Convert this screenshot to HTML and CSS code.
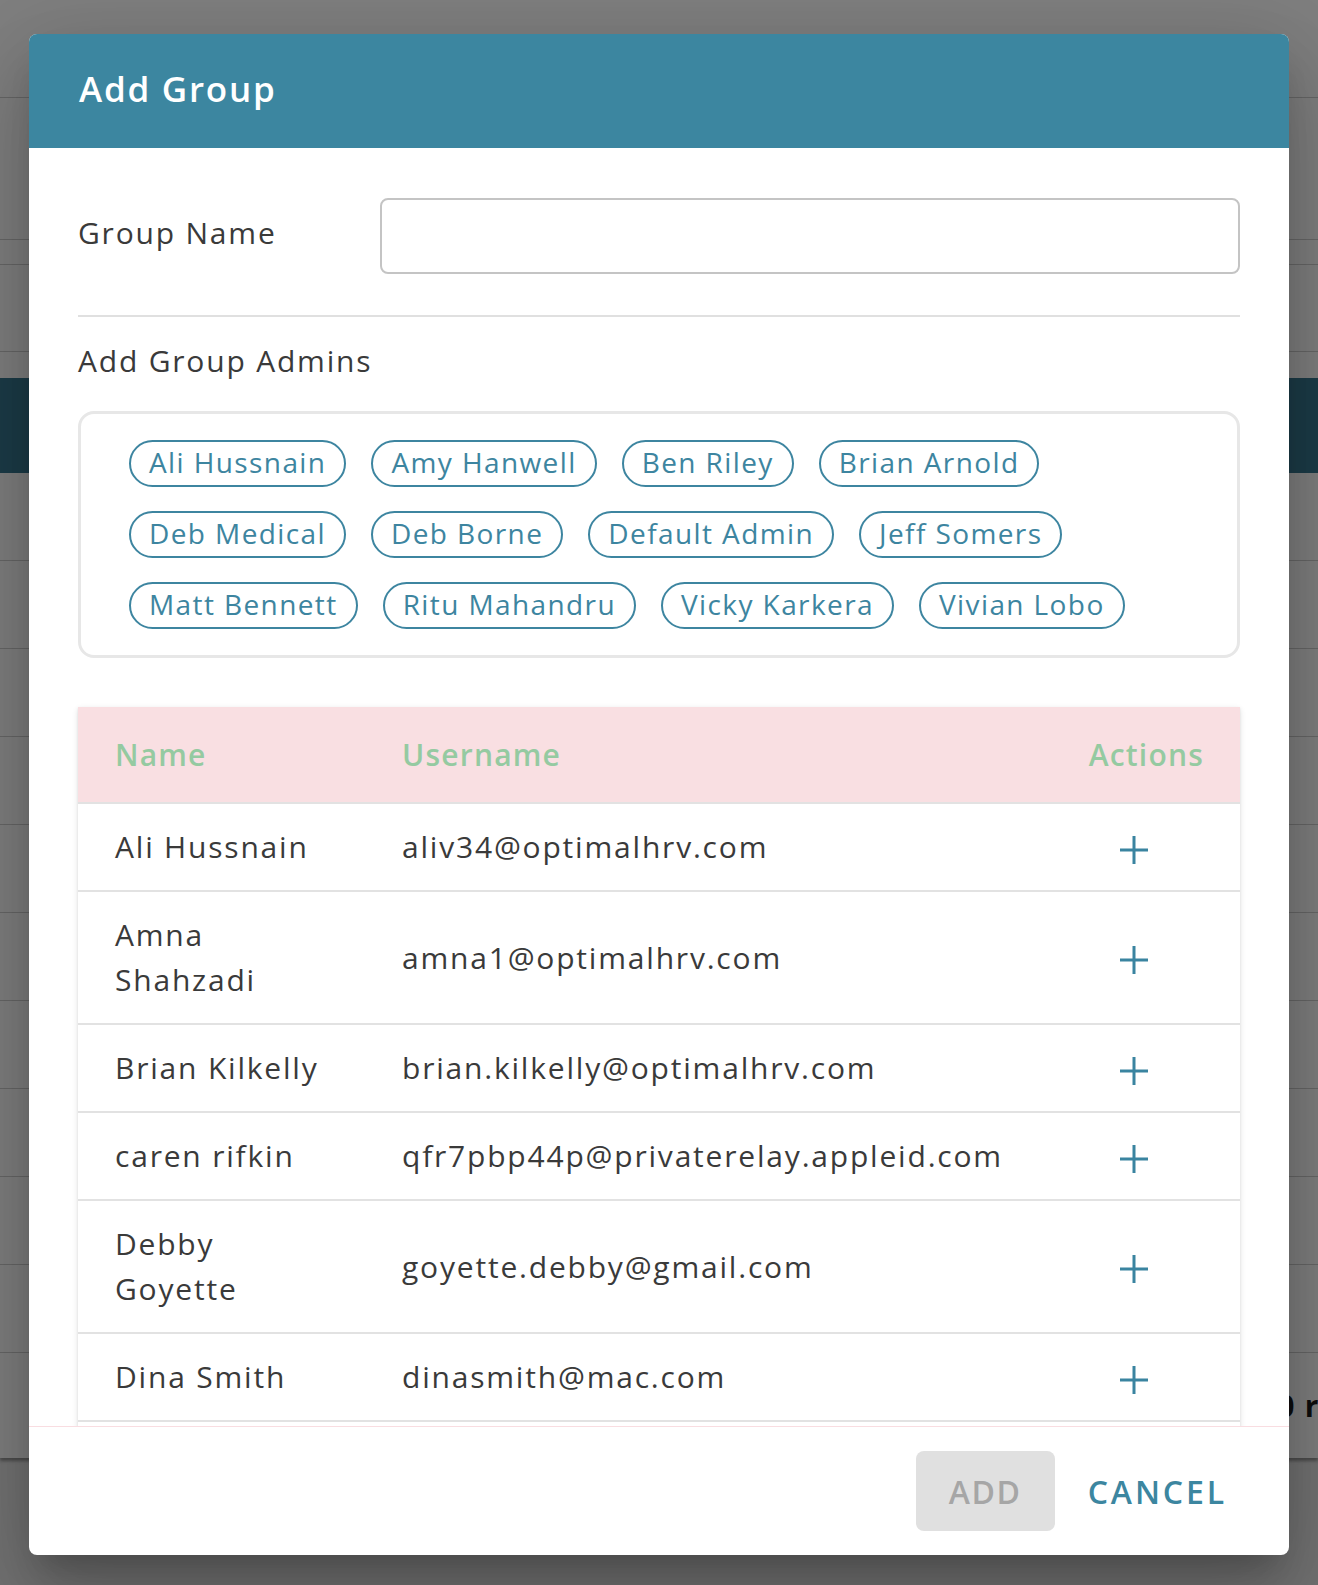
FILE: index.html
```html
<!DOCTYPE html>
<html lang="en">
<head>
<meta charset="utf-8">
<title>Add Group</title>
<link rel="stylesheet" href="styles.css">
</head>
<body>
<div class="page">
  <div class="bg-row bg-a"></div>
  <div class="bg-row bg-b"></div>
  <div class="bg-row bg-c"></div>
  <div class="bg-row bg-d"></div>
  <div class="bg-gap"></div>
  <div class="bg-band"></div>
  <div class="bg-row bg-item"></div>
  <div class="bg-row bg-item"></div>
  <div class="bg-row bg-item"></div>
  <div class="bg-row bg-item"></div>
  <div class="bg-row bg-item"></div>
  <div class="bg-row bg-item"></div>
  <div class="bg-row bg-item"></div>
  <div class="bg-row bg-item"></div>
  <div class="bg-row bg-item"></div>
  <div class="bg-row bg-item"></div>
  <div class="bg-foot"><span class="bg-foot-text">10 rows</span></div>
</div>

<div class="backdrop"></div>

<div class="dialog">
  <div class="dialog-title">Add Group</div>
  <div class="dialog-content">
    <div class="field-row">
      <div class="field-label">Group Name</div>
      <div class="text-input"></div>
    </div>
    <div class="divider"></div>
    <div class="section-label">Add Group Admins</div>
    <div class="chips">
      <span class="chip">Ali Hussnain</span>
      <span class="chip">Amy Hanwell</span>
      <span class="chip">Ben Riley</span>
      <span class="chip">Brian Arnold</span>
      <span class="chip">Deb Medical</span>
      <span class="chip">Deb Borne</span>
      <span class="chip">Default Admin</span>
      <span class="chip">Jeff Somers</span>
      <span class="chip">Matt Bennett</span>
      <span class="chip">Ritu Mahandru</span>
      <span class="chip">Vicky Karkera</span>
      <span class="chip">Vivian Lobo</span>
    </div>
    <div class="table-paper">
      <table class="users">
        <colgroup>
          <col class="col-name">
          <col class="col-user">
          <col class="col-actions">
        </colgroup>
        <thead>
          <tr>
            <th class="th-name">Name</th>
            <th class="th-user">Username</th>
            <th class="th-actions">Actions</th>
          </tr>
        </thead>
        <tbody>
          <tr>
            <td class="td-name">Ali Hussnain</td>
            <td class="td-user">aliv34@optimalhrv.com</td>
            <td class="td-actions"><svg class="plus" viewBox="0 0 28 28" width="28" height="28"><path d="M14 0V28M0 14H28"/></svg></td>
          </tr>
          <tr>
            <td class="td-name">Amna Shahzadi</td>
            <td class="td-user">amna1@optimalhrv.com</td>
            <td class="td-actions"><svg class="plus" viewBox="0 0 28 28" width="28" height="28"><path d="M14 0V28M0 14H28"/></svg></td>
          </tr>
          <tr>
            <td class="td-name">Brian Kilkelly</td>
            <td class="td-user">brian.kilkelly@optimalhrv.com</td>
            <td class="td-actions"><svg class="plus" viewBox="0 0 28 28" width="28" height="28"><path d="M14 0V28M0 14H28"/></svg></td>
          </tr>
          <tr>
            <td class="td-name">caren rifkin</td>
            <td class="td-user">qfr7pbp44p@privaterelay.appleid.com</td>
            <td class="td-actions"><svg class="plus" viewBox="0 0 28 28" width="28" height="28"><path d="M14 0V28M0 14H28"/></svg></td>
          </tr>
          <tr>
            <td class="td-name">Debby Goyette</td>
            <td class="td-user">goyette.debby@gmail.com</td>
            <td class="td-actions"><svg class="plus" viewBox="0 0 28 28" width="28" height="28"><path d="M14 0V28M0 14H28"/></svg></td>
          </tr>
          <tr>
            <td class="td-name">Dina Smith</td>
            <td class="td-user">dinasmith@mac.com</td>
            <td class="td-actions"><svg class="plus" viewBox="0 0 28 28" width="28" height="28"><path d="M14 0V28M0 14H28"/></svg></td>
          </tr>
          <tr class="row-more">
            <td></td>
            <td></td>
            <td></td>
          </tr>
        </tbody>
      </table>
    </div>
  </div>
  <div class="dialog-actions">
    <button class="btn btn-add" disabled>ADD</button>
    <button class="btn btn-cancel">CANCEL</button>
  </div>
</div>
</body>
</html>
```

FILE: styles.css
```css
* {
  box-sizing: border-box;
}

html,
body {
  margin: 0;
  padding: 0;
}

body {
  position: relative;
  width: 1318px;
  height: 1585px;
  overflow: hidden;
  background: #e6e6e6;
  font-family: "Open Sans", "Noto Sans", sans-serif;
}

/* underlying page (seen through the backdrop) */
.page {
  background: #ffffff;
}

.bg-row {
  border-bottom: 1px solid #cfcfcf;
}

.bg-a { height: 98px; }
.bg-b { height: 142px; }
.bg-c { height: 25px; }
.bg-d { height: 87px; }
.bg-gap { height: 26px; }

.bg-band {
  height: 95px;
  background: #387890;
}

.bg-item { height: 88px; }

.bg-foot {
  height: 105px;
  display: flex;
  align-items: center;
  padding-left: 1259px;
  white-space: nowrap;
  box-shadow: 0 3px 3px rgba(0, 0, 0, 0.35);
}

.bg-foot-text {
  font-size: 30px;
  font-weight: 700;
  color: #1a1a1a;
  letter-spacing: 0.04em;
}

.backdrop {
  position: absolute;
  inset: 0;
  background: rgba(0, 0, 0, 0.5);
}

/* dialog */
.dialog {
  position: absolute;
  left: 29px;
  top: 34px;
  width: 1260px;
  height: 1521px;
  background: #ffffff;
  border-radius: 8px;
  overflow: hidden;
  display: flex;
  flex-direction: column;
  box-shadow:
    0 22px 30px -14px rgba(0, 0, 0, 0.2),
    0 48px 76px 6px rgba(0, 0, 0, 0.14),
    0 18px 92px 16px rgba(0, 0, 0, 0.12);
}

.dialog-title {
  flex: 0 0 114px;
  display: flex;
  align-items: center;
  padding: 0 0 6px 50px;
  background: #3c86a0;
  color: #ffffff;
  font-size: 35px;
  font-weight: 600;
  letter-spacing: 0.05em;
}

.dialog-content {
  flex: 1 1 auto;
  min-height: 0;
  overflow: hidden;
  padding: 0 49px;
  color: #3a3a3a;
  font-size: 30px;
  letter-spacing: 0.06em;
}

.field-row {
  display: flex;
  align-items: center;
  margin-top: 50px;
}

.field-label {
  flex: 0 0 302px;
  line-height: 45px;
  padding-bottom: 7px;
}

.text-input {
  flex: 1 1 auto;
  height: 76px;
  border: 2px solid #c4c4c4;
  border-radius: 8px;
}

.divider {
  height: 2px;
  margin-top: 41px;
  background: #e0e0e0;
}

.section-label {
  margin-top: 21px;
  line-height: 45px;
}

.chips {
  display: flex;
  flex-wrap: wrap;
  row-gap: 24px;
  column-gap: 25px;
  margin-top: 28px;
  padding: 26px 24px 26px 48px;
  border: 3px solid #e7e7e7;
  border-radius: 16px;
}

.chip {
  display: inline-flex;
  align-items: center;
  height: 47px;
  padding: 0 18px 2px;
  border: 2px solid #3d85a0;
  border-radius: 24px;
  color: #3d85a0;
  font-size: 28px;
  letter-spacing: 0.05em;
  line-height: 41px;
  white-space: nowrap;
}

.table-paper {
  margin-top: 49px;
  background: #ffffff;
  box-shadow:
    0 2px 6px rgba(0, 0, 0, 0.12),
    0 1px 2px rgba(0, 0, 0, 0.08);
}

.users {
  width: 100%;
  border-collapse: collapse;
  table-layout: fixed;
}

.col-name { width: 287px; }
.col-actions { width: 200px; }

.users th {
  height: 96px;
  padding: 24px 0 25px 37px;
  background: #f9dfe2;
  color: #95caa1;
  font-size: 30px;
  font-weight: 600;
  letter-spacing: 0.04em;
  line-height: 45px;
  text-align: left;
  border-bottom: 2px solid #e2e2e2;
}

.users th.th-actions {
  padding-right: 36px;
  text-align: right;
}

.users td {
  padding: 20px 16px 21px 37px;
  line-height: 45px;
  border-bottom: 2px solid #e2e2e2;
  vertical-align: middle;
}

.users td.td-name {
  padding-right: 36px;
}

.users td.td-user {
  white-space: nowrap;
}

.users td.td-actions {
  padding-right: 36px;
  text-align: right;
}

.users .row-more td {
  height: 88px;
}

.plus {
  display: inline-block;
  vertical-align: middle;
  margin-right: 56px;
  fill: none;
  stroke: #3a84a0;
  stroke-width: 3;
}

.dialog-actions {
  flex: 0 0 129px;
  display: flex;
  align-items: center;
  justify-content: flex-end;
  gap: 9px;
  padding-right: 38px;
  border-top: 1px solid #f9dde1;
}

.btn {
  height: 80px;
  border: none;
  border-radius: 8px;
  background: transparent;
  font-family: "Open Sans", "Noto Sans", sans-serif;
  font-size: 32px;
  font-weight: 600;
  letter-spacing: 0.09em;
  padding: 0 24px;
}

.btn-add {
  width: 139px;
  padding: 0;
  background: #e0e0e0;
  color: #a6a6a6;
  letter-spacing: 0.05em;
}

.btn-cancel {
  color: #3c86a0;
}
```
